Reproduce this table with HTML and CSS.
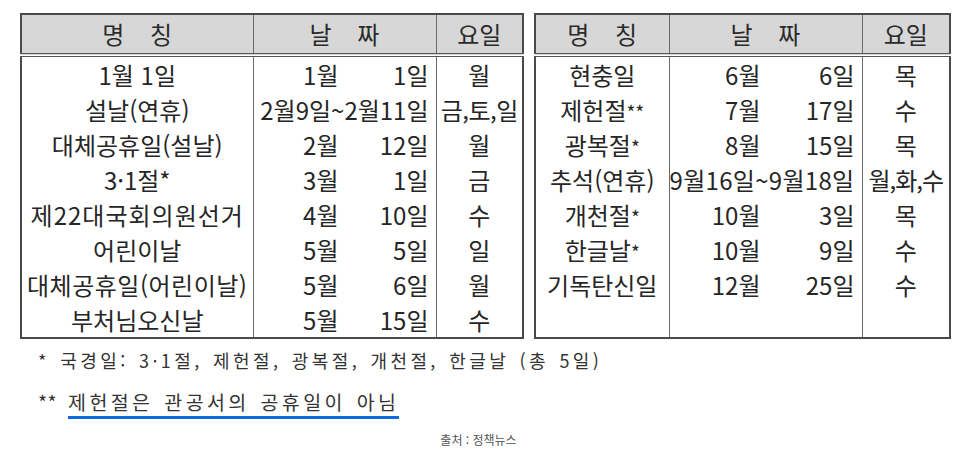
FILE: index.html
```html
<!DOCTYPE html>
<html lang="ko">
<head>
<meta charset="utf-8">
<title>2024 공휴일</title>
<link rel="stylesheet" href="styles.css">
</head>
<body>
<div class="page">
  <div class="tables">
    <table class="holidays left">
      <colgroup><col class="c-name"><col class="c-date"><col class="c-day"></colgroup>
      <thead>
        <tr><th class="spaced">명 칭</th><th class="spaced">날 짜</th><th>요일</th></tr>
      </thead>
      <tbody>
        <tr><td>1월 1일</td><td><div class="date"><span class="m">1월</span><span class="d">1일</span></div></td><td>월</td></tr>
        <tr><td>설날(연휴)</td><td><div class="date range">2월9일~2월11일</div></td><td class="multi">금,토,일</td></tr>
        <tr><td>대체공휴일(설날)</td><td><div class="date"><span class="m">2월</span><span class="d">12일</span></div></td><td>월</td></tr>
        <tr><td>3·1절*</td><td><div class="date"><span class="m">3월</span><span class="d">1일</span></div></td><td>금</td></tr>
        <tr><td class="wide1">제22대국회의원선거</td><td><div class="date"><span class="m">4월</span><span class="d">10일</span></div></td><td>수</td></tr>
        <tr><td>어린이날</td><td><div class="date"><span class="m">5월</span><span class="d">5일</span></div></td><td>일</td></tr>
        <tr><td class="wide2">대체공휴일(어린이날)</td><td><div class="date"><span class="m">5월</span><span class="d">6일</span></div></td><td>월</td></tr>
        <tr><td>부처님오신날</td><td><div class="date"><span class="m">5월</span><span class="d">15일</span></div></td><td>수</td></tr>
      </tbody>
    </table>
    <table class="holidays right">
      <colgroup><col class="c-name"><col class="c-date"><col class="c-day"></colgroup>
      <thead>
        <tr><th class="spaced">명 칭</th><th class="spaced">날 짜</th><th>요일</th></tr>
      </thead>
      <tbody>
        <tr><td>현충일</td><td><div class="date"><span class="m">6월</span><span class="d">6일</span></div></td><td>목</td></tr>
        <tr><td>제헌절<span class="ast">**</span></td><td><div class="date"><span class="m">7월</span><span class="d">17일</span></div></td><td>수</td></tr>
        <tr><td>광복절<span class="ast">*</span></td><td><div class="date"><span class="m">8월</span><span class="d">15일</span></div></td><td>목</td></tr>
        <tr><td>추석(연휴)</td><td><div class="date range">9월16일~9월18일</div></td><td class="multi">월,화,수</td></tr>
        <tr><td>개천절<span class="ast">*</span></td><td><div class="date"><span class="m">10월</span><span class="d">3일</span></div></td><td>목</td></tr>
        <tr><td>한글날<span class="ast">*</span></td><td><div class="date"><span class="m">10월</span><span class="d">9일</span></div></td><td>수</td></tr>
        <tr><td>기독탄신일</td><td><div class="date"><span class="m">12월</span><span class="d">25일</span></div></td><td>수</td></tr>
        <tr><td></td><td></td><td></td></tr>
      </tbody>
    </table>
  </div>
  <div class="notes">
    <p class="note first">* 국경일: 3·1절, 제헌절, 광복절, 개천절, 한글날 (총 5일)</p>
    <p class="note second"><span class="stars">**</span> <span class="mark">제헌절은 관공서의 공휴일이 아님</span></p>
  </div>
  <p class="source">출처 : 정책뉴스</p>
</div>
</body>
</html>
```

FILE: styles.css
```css
html, body {
  margin: 0;
  padding: 0;
  background: #ffffff;
}

.page {
  width: 957px;
  height: 454px;
  box-sizing: border-box;
  padding: 13px 0 0 20px;
  font-family: "Noto Sans CJK KR", "Noto Sans", sans-serif;
  color: #262626;
}

.tables {
  display: flex;
  gap: 10px;
  align-items: flex-start;
}

.holidays {
  border-collapse: collapse;
  table-layout: fixed;
  border: 2px solid #4a4a4a;
  font-size: 24px;
  line-height: 1;
}

.holidays.left { width: 502px; }
.holidays.right { width: 415px; }

.left .c-name { width: 232px; }
.left .c-date { width: 183px; }
.left .c-day { width: 87px; }

.right .c-name { width: 134px; }
.right .c-date { width: 193px; }
.right .c-day { width: 88px; }

.holidays th {
  height: 38px;
  padding: 0;
  background: #d7d7d7;
  font-weight: 400;
  color: #2b2b2b;
  border-left: 1px solid #6a6a6a;
  border-bottom: 4px double #555555;
  text-align: center;
  white-space: nowrap;
}

.holidays th.spaced {
  word-spacing: 19px;
}

.holidays td {
  height: 35px;
  padding: 0;
  text-align: center;
  white-space: nowrap;
  border-left: 1px solid #6a6a6a;
  overflow: visible;
}

.holidays th:first-child,
.holidays td:first-child {
  border-left: none;
}

.date {
  display: flex;
  align-items: center;
  padding-right: 7px;
}

.left .m { width: 85px; }
.right .m { width: 91px; }

.m {
  text-align: right;
  flex: none;
}

.d {
  flex: 1;
  text-align: right;
}

.date.range {
  justify-content: flex-end;
  letter-spacing: 0;
}

.right .date.range {
  letter-spacing: 0.3px;
}

.multi {
  letter-spacing: -0.5px;
}

.right .multi {
  letter-spacing: -1px;
}

.wide1 { letter-spacing: 1px; }
.wide2 { letter-spacing: 0.5px; }

.ast {
  font-size: 19px;
}

.notes {
  margin-top: 1px;
  padding-left: 18px;
}

.note {
  margin: 0;
  height: 41px;
  line-height: 41px;
  color: #333333;
  white-space: nowrap;
}

.note.first {
  font-size: 18px;
  letter-spacing: 3.4px;
  word-spacing: 2px;
}

.note.second {
  font-size: 19.5px;
  letter-spacing: 3.4px;
  word-spacing: 2px;
}

.stars {
  letter-spacing: 0.5px;
}

.mark {
  border-bottom: 3px solid #0a6be0;
  padding-bottom: 0px;
}

.source {
  margin: 10px 0 0 0;
  padding-right: 20px;
  line-height: 16px;
  text-align: center;
  font-size: 12px;
  color: #555555;
}
```
